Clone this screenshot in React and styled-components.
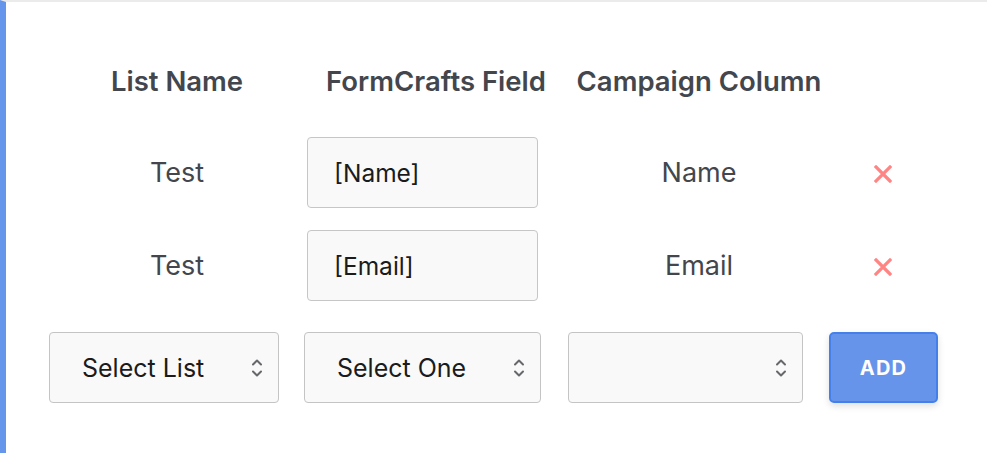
import styled, { createGlobalStyle } from "styled-components"

const Global = createGlobalStyle`
  html, body {
    margin: 0;
    padding: 0;
    background: #ffffff;
  }
  body {
    font-family: Inter, "Open Sans", "Liberation Sans", sans-serif;
  }
`

const Frame = styled.div`
  box-sizing: border-box;
  height: 453px;
  border-left: 6px solid #6695ec;
  border-top: 2px solid #ebebeb;
  padding: 46px 0 0 43px;
`

const Table = styled.div`
  display: grid;
  grid-template-columns: 256px 262px 264px 104px;
  grid-template-rows: 66px 71px 71px;
  row-gap: 22px;
`

const Head = styled.div`
  display: flex;
  align-items: center;
  justify-content: center;
  font-size: 27.5px;
  font-weight: 600;
  color: #43474d;
  white-space: nowrap;
`

const Cell = styled.div`
  display: flex;
  align-items: center;
  justify-content: ${(p) => (p.$start ? "flex-start" : "center")};
  padding-left: ${(p) => (p.$start ? "2px" : "0")};
  padding-top: ${(p) => (p.$icon ? "5px" : "2px")};
  font-size: 27px;
  color: #43474d;
`

const FieldBox = styled.div`
  box-sizing: border-box;
  width: 231px;
  height: 71px;
  display: flex;
  align-items: center;
  padding-left: 26px;
  border: 1.5px solid #c6c6c6;
  border-radius: 4px;
  background: #f9f9f9;
  font-size: 24.5px;
  color: #1b1b1b;
`

const BottomRow = styled.div`
  display: flex;
  align-items: center;
  margin-top: 32px;
`

const Select = styled.div`
  box-sizing: border-box;
  width: ${(p) => p.$w}px;
  height: 71px;
  margin-right: ${(p) => p.$gap}px;
  display: flex;
  align-items: center;
  justify-content: space-between;
  padding: 0 14px 0 32px;
  border: 1.5px solid #c4c4c4;
  border-radius: 4px;
  background: #f9f9f9;
  font-size: 25px;
  color: #1b1b1b;
`

const AddButton = styled.button`
  box-sizing: border-box;
  width: 109px;
  height: 71px;
  border: 2px solid #4580ea;
  border-radius: 5px;
  background: #6694ea;
  color: #ffffff;
  font-family: inherit;
  font-size: 20px;
  font-weight: 700;
  letter-spacing: 1.2px;
  box-shadow: 0 3px 7px rgba(0, 0, 0, 0.13);
  cursor: pointer;
`

const Chevrons = () => (
  <svg width="14" height="22" viewBox="0 0 14 22" fill="none" stroke="#66686c" strokeWidth="2" strokeLinecap="round" strokeLinejoin="round">
    <path d="M3 7.5 L7 3.5 L11 7.5" />
    <path d="M3 14.5 L7 18.5 L11 14.5" />
  </svg>
)

const Remove = () => (
  <svg width="18" height="18" viewBox="0 0 18 18" stroke="#ff8585" strokeWidth="3.2" strokeLinecap="square">
    <path d="M2 2 L16 16 M16 2 L2 16" />
  </svg>
)

const rows = [
  { list: "Test", field: "[Name]", column: "Name" },
  { list: "Test", field: "[Email]", column: "Email" },
]

const App = () => {
  return (
    <>
      <Global />
      <Frame>
        <Table>
          <Head>List Name</Head>
          <Head>FormCrafts Field</Head>
          <Head>Campaign Column</Head>
          <Head />
          {rows.map((r) => (
            <>
              <Cell>{r.list}</Cell>
              <Cell $start>
                <FieldBox>{r.field}</FieldBox>
              </Cell>
              <Cell>{r.column}</Cell>
              <Cell $icon>
                <Remove />
              </Cell>
            </>
          ))}
        </Table>
        <BottomRow>
          <Select $w={230} $gap={25}>
            Select List <Chevrons />
          </Select>
          <Select $w={237} $gap={27}>
            Select One <Chevrons />
          </Select>
          <Select $w={235} $gap={26}>
            <span />
            <Chevrons />
          </Select>
          <AddButton>ADD</AddButton>
        </BottomRow>
      </Frame>
    </>
  )
}

export default App
